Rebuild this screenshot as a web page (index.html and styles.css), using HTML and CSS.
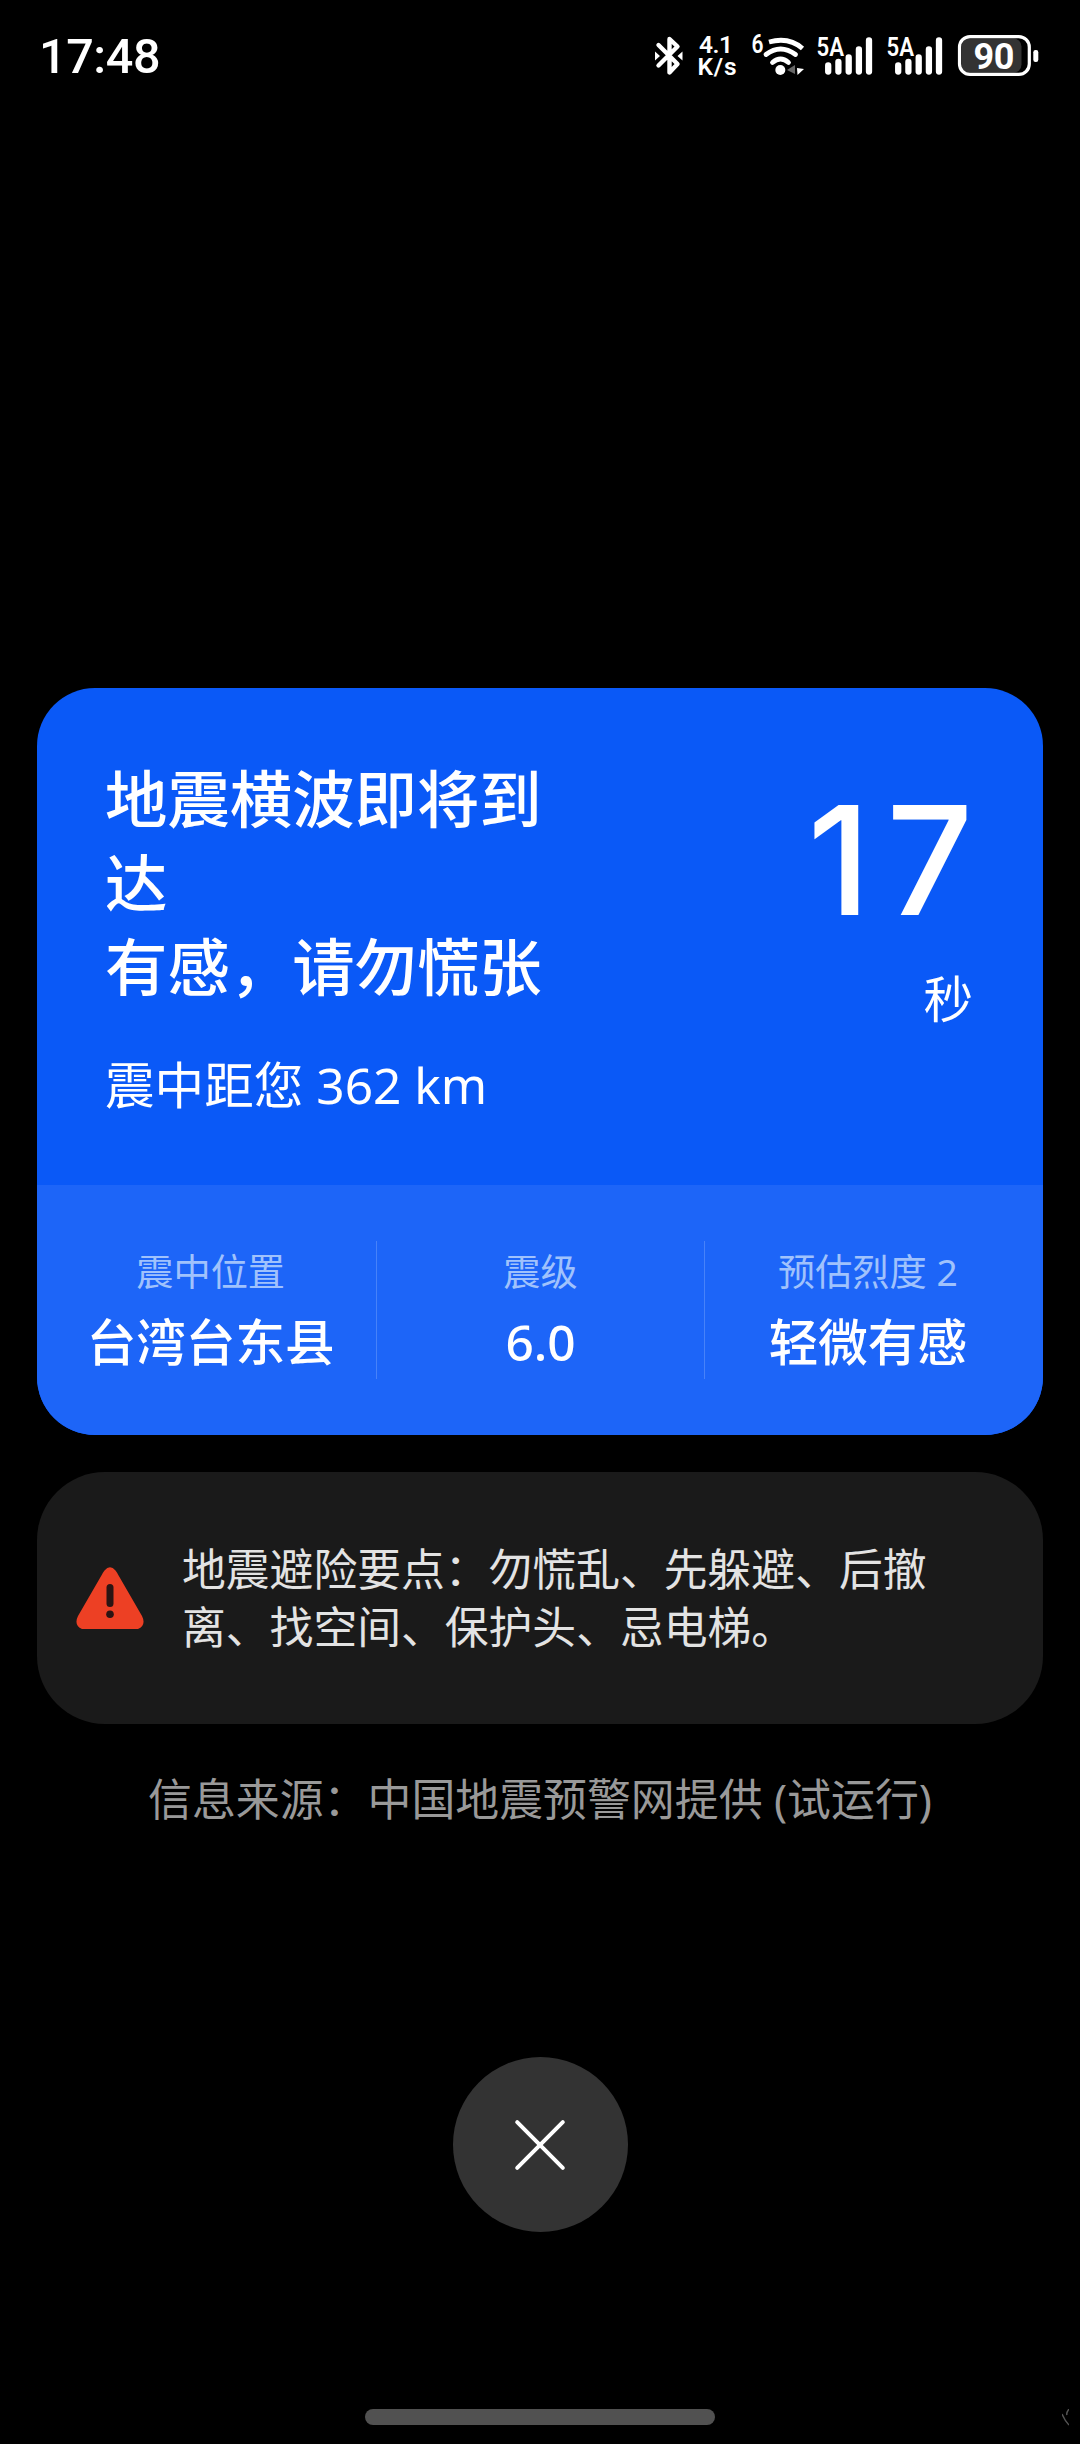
FILE: index.html
```html
<!DOCTYPE html>
<html lang="zh-CN">
<head>
<meta charset="utf-8">
<title>地震预警</title>
<link rel="stylesheet" href="styles.css">
</head>
<body>
<header class="status">
  <span class="clock">17:48</span>
  <svg class="indicators" width="392" height="80" viewBox="649 17 392 80">
    <g fill="none" stroke="#fff" stroke-width="4.400" stroke-linejoin="round" stroke-linecap="round">
      <path d="M658.5 46 L677.5 65 L669.5 73.5 V40 L677.5 47.5 L658.5 66.5"/>
    </g>
    <path fill="#fff" d="M655 52.5 L660 57 L655 61.5 Z M682.5 52.5 L677.5 57 L682.5 61.5 Z"/>
    <text class="net" x="699" y="54" textLength="34">4.1</text>
    <text class="net" x="697.5" y="75.6" textLength="39">K/s</text>
    <text class="mini" x="751.500" y="54" textLength="12" lengthAdjust="spacingAndGlyphs">6</text>
    <g fill="none" stroke="#fff" stroke-width="4.8">
      <path stroke-linecap="butt" d="M769 43 Q789 37.5 802.500 49.500"/>
      <path stroke-linecap="round" d="M766 55.500 Q780.500 44.500 795.500 55.500"/>
      <path stroke-linecap="round" d="M772.500 63.500 Q780.500 56.500 788.500 63.500"/>
    </g>
    <circle cx="780.300" cy="71" r="5" fill="#fff"/>
    <path fill="#666" d="M787 71 L795 66 V75 Z"/>
    <path fill="#fff" d="M797 69 L804 70 L797.500 76 Z"/>
    <text class="mini" x="816.500" y="56.500" textLength="27.500" lengthAdjust="spacingAndGlyphs">5A</text>
    <g id="bars" stroke="#fff" stroke-width="6.300" stroke-linecap="round">
      <path d="M828.200 66.500 V72.500 M838.400 63 V72.500 M848.700 58.500 V72.500 M858.900 50.500 V72.500 M869 41.300 V72.500"/>
    </g>
    <text class="mini" x="886.500" y="56.500" textLength="27.500" lengthAdjust="spacingAndGlyphs">5A</text>
    <use href="#bars" x="70"/>
    <rect x="961.500" y="39.500" width="60" height="34" rx="8" fill="#333"/>
    <rect x="959.500" y="37.600" width="69.800" height="37.800" rx="10.500" fill="none" stroke="#fff" stroke-width="3.200"/>
    <rect x="1033.300" y="51" width="5" height="12" rx="2.200" fill="#fff"/>
    <text class="battery" x="973.500" y="70.300" textLength="41">90</text>
  </svg>
</header>

<main class="content">
  <section class="alert">
    <div class="alert-main">
      <div class="alert-text">
        <h1 class="title">地震横波即将到达<br>有感，请勿慌张</h1>
        <p class="distance">震中距您 362 km</p>
      </div>
      <div class="countdown">
        <span class="seconds">17</span>
        <span class="unit">秒</span>
      </div>
    </div>
    <div class="stats">
      <div class="stat"><span class="label">震中位置</span><span class="value">台湾台东县</span></div>
      <div class="stat"><span class="label">震级</span><span class="value">6.0</span></div>
      <div class="stat"><span class="label">预估烈度 2</span><span class="value">轻微有感</span></div>
    </div>
  </section>

  <section class="tips">
    <svg class="warn" width="68" height="62" viewBox="0 0 68 62">
      <path fill="#ed4024" d="M28.500 3.500 Q34 -3 39.500 3.500 Q41 5.500 42 7.500 L66 49 Q70.500 58 62 62 H6 Q-2.500 58 2 49 L26 7.500 Q27 5.500 28.500 3.500 Z"/>
      <path stroke="#2b1413" stroke-width="7" stroke-linecap="round" d="M34 20.500 V36.500"/>
      <circle cx="34" cy="47.300" r="3.800" fill="#2b1413"/>
    </svg>
    <p class="tips-text">地震避险要点：勿慌乱、先躲避、后撤离、找空间、保护头、忌电梯。</p>
  </section>

  <p class="source">信息来源：中国地震预警网提供 (试运行)</p>

  <button class="close" aria-label="关闭">
    <svg width="52" height="52" viewBox="0 0 52 52"><path fill="none" stroke="#fff" stroke-width="4" stroke-linecap="round" d="M3.200 3.200 L48.800 48.800 M48.800 3.200 L3.200 48.800"/></svg>
  </button>
</main>

<footer class="nav">
  <span class="home"></span>
  <svg class="mark" width="7" height="20" viewBox="0 0 7 20"><path d="M7 0 Q4 4 5 6 M0 5 Q3 12 7 16" fill="none" stroke="#555" stroke-width="1.500"/></svg>
</footer>
</body>
</html>
```
FILE: styles.css
```css
* { box-sizing: border-box; }

body {
  margin: 0;
  width: 1080px;
  height: 2444px;
  display: flex;
  flex-direction: column;
  background: #000;
  color: #fff;
  font-family: "Noto Sans", "Noto Sans CJK SC", sans-serif;
}

h1, p { margin: 0; font-weight: 400; }

.status {
  height: 112px;
  padding: 0 39px 0 39px;
  display: flex;
  justify-content: space-between;
  align-items: center;
}
.clock { padding-top: 2px; font-family: Roboto, sans-serif; font-size: 48.5px; font-weight: 500; line-height: 60px; letter-spacing: -0.4px; }
.indicators { display: block; }
.indicators text { fill: #fff; font-family: Roboto, sans-serif; }
.net { font-size: 24.5px; font-weight: 600; }
.mini { font-size: 25px; font-weight: 600; }
.battery { font-size: 36px; font-weight: 700; }

.content {
  flex: 1;
  padding: 576px 37px 0;
  display: flex;
  flex-direction: column;
  align-items: center;
}

.alert {
  width: 100%;
  height: 747px;
  border-radius: 58px;
  overflow: hidden;
  background: #0a59f7;
}
.alert-main {
  height: 497px;
  padding: 69px 70px 0 68px;
  display: flex;
  justify-content: space-between;
}
.title {
  width: 439px;
  font-size: 62.4px;
  line-height: 84px;
  font-weight: 500;
}
.distance { margin-top: 43px; font-size: 49.6px; line-height: 66px; white-space: nowrap; }
.countdown { display: flex; flex-direction: column; align-items: flex-end; }
.seconds { padding-top: 3px; font-family: Inter, sans-serif; font-size: 151.5px; line-height: 200px; font-weight: 500; letter-spacing: 16px; margin-right: -16px; }
.unit { margin-top: 6px; font-size: 49.6px; line-height: 66px; }

.stats {
  height: 250px;
  padding: 56px 12px;
  display: grid;
  grid-template-columns: repeat(3, 1fr);
  background: #1d65f8;
}
.stat { display: flex; flex-direction: column; align-items: center; padding-top: 6px; }
.stat:first-child { padding-right: 4px; }
.stat + .stat { border-left: 1px solid #4782f9; }
.label { font-size: 37.2px; line-height: 50px; color: #a0c2fc; }
.value { margin-top: 12px; font-size: 49.6px; line-height: 66px; font-weight: 500; }

.tips {
  margin-top: 37px;
  width: 100%;
  height: 252px;
  padding: 0 100px 0 39px;
  display: flex;
  align-items: center;
  gap: 38px;
  border-radius: 68px;
  background: #1a1a1a;
}
.warn { flex: none; }
.tips-text { width: 750px; font-size: 43.8px; line-height: 58.4px; color: #e3e3e3; }

.source { margin-top: 46px; font-size: 43.9px; line-height: 58px; color: #999; }

.close {
  margin-top: 229px;
  width: 175px;
  height: 175px;
  padding: 0;
  border: 0;
  border-radius: 50%;
  background: #333;
  display: flex;
  align-items: center;
  justify-content: center;
}

.nav {
  height: 35px;
  padding-right: 11px;
  display: grid;
  grid-template-columns: 365px 350px 1fr;
  align-items: start;
}
.home { grid-column: 2; height: 16px; border-radius: 8px; background: #515151; }
.mark { justify-self: end; }
```
